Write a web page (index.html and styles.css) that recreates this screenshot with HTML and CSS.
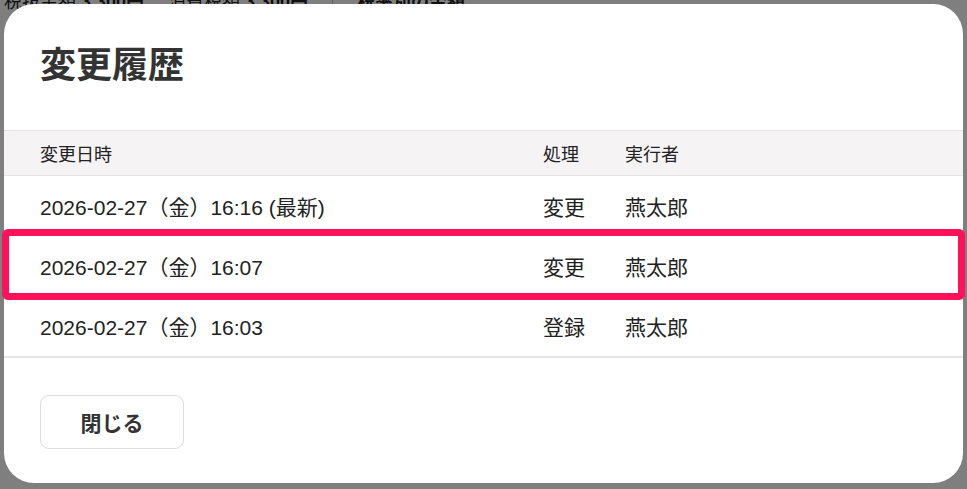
FILE: index.html
```html
<!DOCTYPE html>
<html lang="ja">
<head>
    <meta charset="UTF-8">
    <meta name="viewport" content="width=device-width, initial-scale=1.0">
    <title>変更履歴</title>
    <link rel="stylesheet" href="styles.css">
</head>
<body>
    <!-- 背面の見積画面 -->
    <div class="page">
        <div class="summary">
            <span>税抜金額 <b>3,300円</b></span>
            <span>消費税額 <b>3,300円</b></span>
            <span class="summary-link">税率別の金額</span>
        </div>
        <p class="page-note">(</p>
        <div class="page-rule"></div>
        <div class="page-foot">見積</div>
    </div>

    <div class="overlay"></div>

    <div class="modal">
        <h2 class="modal-title">変更履歴</h2>

        <div class="history">
            <div class="history-row history-head">
                <div>変更日時</div>
                <div>処理</div>
                <div>実行者</div>
            </div>
            <div class="history-row">
                <div>2026-02-27（金）16:16 (最新)</div>
                <div>変更</div>
                <div>燕太郎</div>
            </div>
            <div class="history-row is-marked">
                <div>2026-02-27（金）16:07</div>
                <div>変更</div>
                <div>燕太郎</div>
            </div>
            <div class="history-row">
                <div>2026-02-27（金）16:03</div>
                <div>登録</div>
                <div>燕太郎</div>
            </div>
        </div>

        <div class="modal-footer">
            <button class="btn-close">閉じる</button>
        </div>
    </div>
</body>
</html>
```

FILE: styles.css
```css
* {
    margin: 0;
    padding: 0;
    box-sizing: border-box;
    font-family: 'Liberation Sans', 'Noto Sans CJK JP', sans-serif;
}

body {
    background-color: #fff;
    color: #222;
    overflow: hidden;
}

/* 背面の画面 */
.page {
    margin-top: -10px;
    padding: 0 4px;
}

.summary {
    display: flex;
    gap: 24px;
    font-size: 18px;
    line-height: 24px;
}

.summary b {
    font-weight: bold;
}

.summary-link {
    border-left: 1px solid #bbb;
    padding-left: 24px;
    font-weight: bold;
}

.page-note {
    font-size: 20px;
    margin-top: 14px;
}

.page-rule {
    border-top: 1px solid #ccc;
    margin-top: 20px;
}

.page-foot {
    text-align: right;
    font-size: 20px;
    margin-top: 320px;
}

.overlay {
    position: fixed;
    inset: 0;
    background-color: rgba(0, 0, 0, 0.5);
}

/* モーダル */
.modal {
    position: fixed;
    left: 4px;
    top: 4px;
    width: 959px;
    height: 479px;
    background-color: #fff;
    border-radius: 30px;
}

.modal-title {
    padding: 38px 36px 0;
    font-size: 36px;
    line-height: 48px;
    font-weight: bold;
    color: #333;
    margin-bottom: 40px;
}

.history {
    border-bottom: 2px solid #e5e5e5;
}

.history-row {
    display: grid;
    grid-template-columns: 503px 82px 1fr;
    align-items: center;
    height: 60px;
    padding-left: 36px;
    font-size: 21px;
    border-bottom: 1px solid #ebebeb;
}

.history-row:last-child {
    border-bottom: none;
}

.history-head {
    height: 46px;
    font-size: 18px;
    background-color: #f5f3f4;
    border-top: 1px solid #e6e3e5;
    border-bottom: 1px solid #e6e3e5;
}

.is-marked {
    position: relative;
}

.is-marked::after {
    content: "";
    position: absolute;
    left: -2px;
    right: -2px;
    top: -7px;
    bottom: -5px;
    border: 7px solid #ff1259;
    border-radius: 6px;
}

.modal-footer {
    padding: 37px 36px 0;
}

.btn-close {
    width: 144px;
    height: 54px;
    background-color: #fff;
    border: 1px solid #dcdcdc;
    border-radius: 9px;
    font-size: 21px;
    font-weight: bold;
    color: #333;
    cursor: pointer;
}
```
